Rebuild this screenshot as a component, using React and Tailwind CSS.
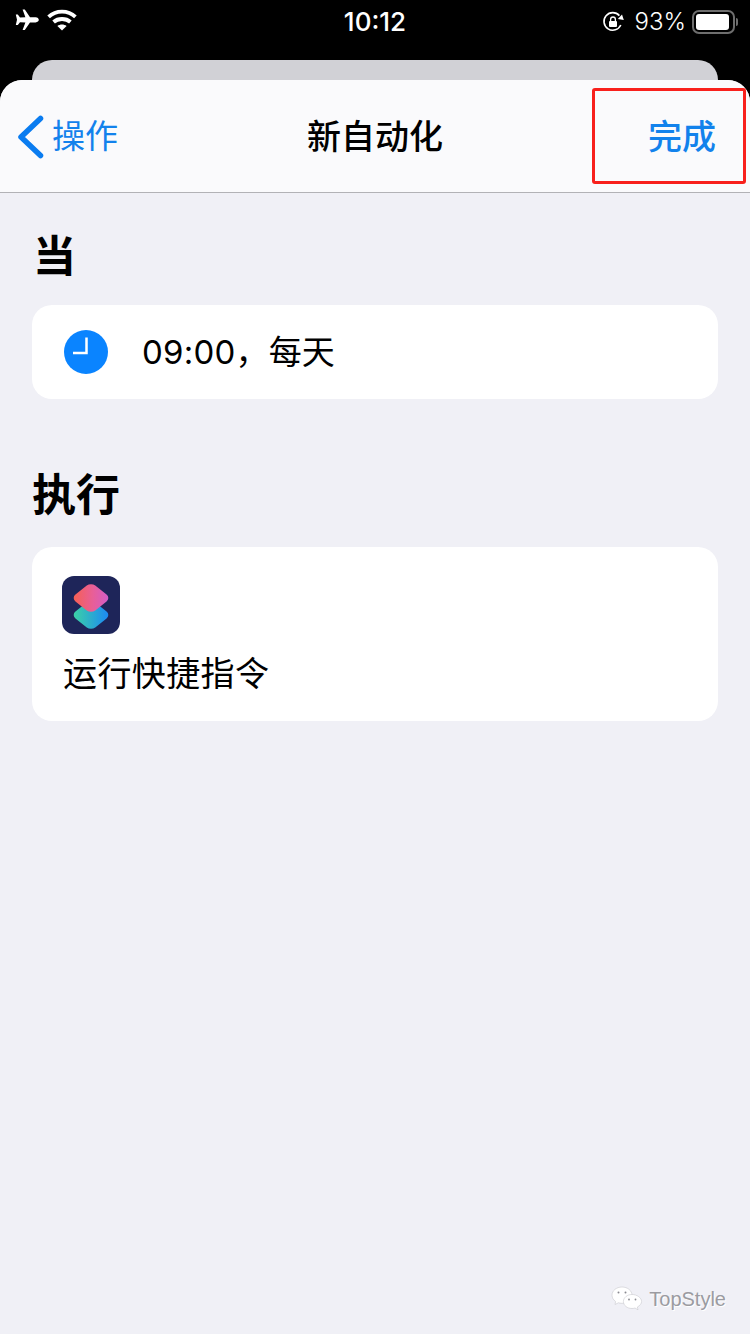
const FONT = 'font-["Inter","Noto_Sans_CJK_SC",sans-serif]'

function Airplane() {
  return (
    <svg width="24" height="22" viewBox="0 0 24 22" fill="#fff">
      <path d="M7.6 0.6 L9.8 0.6 L15 8.2 L20.6 8.2 C22.6 8.2 23.8 9.6 23.8 10.8 C23.8 12 22.6 13.4 20.6 13.4 L15 13.4 L9.8 21 L7.6 21 L10.4 13.4 L5 13.2 L2.8 16 L0.8 16 L2 10.8 L0.8 5.6 L2.8 5.6 L5 8.4 L10.4 8.2 Z" />
    </svg>
  )
}

function Wifi() {
  return (
    <svg width="30" height="22" viewBox="0 0 30 22" fill="none" stroke="#fff" strokeWidth="3.8">
      <path d="M1.6 7.8 C9 0.8 21 0.8 28.4 7.8" />
      <path d="M6.6 13 C11 9 19 9 23.4 13" />
      <path d="M15 21.500 L10.400 17 C13 15 17 15 19.600 17 Z" fill="#fff" stroke="none" />
    </svg>
  )
}

function RotationLock() {
  return (
    <svg width="22" height="22" viewBox="0 0 22 22" fill="none" stroke="#fff" strokeWidth="1.6">
      <path d="M18.800 14 A8.800 8.800 0 1 1 17.400 4.600" />
      <path d="M15.800 8 L21.800 9 L20 3.500 Z" fill="#fff" stroke="none" />
      <rect x="7" y="10" width="8" height="6" rx="1" fill="#fff" stroke="none" />
      <path d="M8.600 10 V8.400 A2.400 2.400 0 0 1 13.400 8.400 V10" strokeWidth="1.300" />
    </svg>
  )
}

function Battery() {
  return (
    <div className="flex items-center gap-[1px]">
      <div className="h-[24px] w-[43px] rounded-[7px] border-2 border-[#6e6e6e] p-[2px]">
        <div className="h-full w-[33px] rounded-[3px] bg-white" />
      </div>
      <div className="h-[8px] w-[2px] rounded-r-[2px] bg-[#6e6e6e]" />
    </div>
  )
}

function ClockIcon() {
  return (
    <svg width="44" height="44" viewBox="0 0 44 44">
      <circle cx="22" cy="22" r="22" fill="#0a84ff" />
      <path d="M22.500 7.500 V23 H9" fill="none" stroke="#fff" strokeWidth="2.500" />
    </svg>
  )
}

function ShortcutsIcon() {
  return (
    <svg width="58" height="58" viewBox="0 0 58 58">
      <defs>
        <linearGradient id="top" x1="0" y1="1" x2="1" y2="0">
          <stop offset="0" stopColor="#f8604a" />
          <stop offset="0.55" stopColor="#e85f98" />
          <stop offset="1" stopColor="#cf5ccf" />
        </linearGradient>
        <linearGradient id="bottom" x1="0" y1="1" x2="1" y2="0">
          <stop offset="0" stopColor="#3ed6a0" />
          <stop offset="1" stopColor="#1a84fa" />
        </linearGradient>
      </defs>
      <rect width="58" height="58" rx="12" fill="#1e2559" />
      <rect x="-14" y="-14" width="28" height="28" rx="6" fill="url(#bottom)" transform="translate(29 39) scale(1 0.8) rotate(45)" />
      <rect x="-14" y="-14" width="28" height="28" rx="6" fill="url(#top)" transform="translate(29 22) scale(1 0.8) rotate(45)" />
    </svg>
  )
}

function WechatMark() {
  return (
    <svg width="32" height="26" viewBox="0 0 32 26" fill="#fff" stroke="#c9c9cf" strokeWidth="0.6">
      <path d="M11 1 C5.500 1 1 4.600 1 9.200 C1 11.800 2.400 14 4.600 15.500 L4 18.500 L7.400 16.800 C8.500 17.100 9.500 17.300 11 17.300 C16.500 17.300 21 13.700 21 9.200 C21 4.600 16.500 1 11 1 Z" />
      <path d="M21 8.500 C16.200 8.500 12.400 11.700 12.400 15.500 C12.400 19.400 16.200 22.500 21 22.500 C22 22.500 23 22.300 24 22 L27 23.800 L26.400 21 C28.800 19.600 30.600 17.700 30.600 15.500 C30.600 11.700 25.800 8.500 21 8.500 Z" />
      <circle cx="7.500" cy="6.500" r="1" fill="#8a8a90" stroke="none" />
      <circle cx="14.500" cy="6.500" r="1" fill="#8a8a90" stroke="none" />
      <circle cx="18" cy="13.500" r="0.9" fill="#8a8a90" stroke="none" />
      <circle cx="24.500" cy="13.500" r="0.9" fill="#8a8a90" stroke="none" />
    </svg>
  )
}

export default function App() {
  return (
    <div className={`flex h-[1334px] w-[750px] flex-col overflow-hidden bg-black ${FONT}`}>
      <div className="flex h-[60px] shrink-0 items-start justify-between pl-[15px] pr-[12px] pt-[9px] text-white">
        <div className="flex items-center gap-[8px]">
          <Airplane />
          <Wifi />
        </div>
        <span className="absolute left-0 w-[750px] text-center text-[26px] font-medium leading-[26px]">10:12</span>
        <div className="flex items-center gap-[6px]">
          <div className="mr-[5px]">
            <RotationLock />
          </div>
          <span className="text-[24px] font-light leading-[26px]">93%</span>
          <Battery />
        </div>
      </div>
      <div className="mx-[32px] h-[20px] shrink-0 rounded-t-[20px] bg-[#d1d1d6]" />

      <div className="relative flex flex-1 flex-col overflow-hidden rounded-t-[22px] bg-[#f0f0f6]">
        <div className="flex h-[113px] shrink-0 items-center justify-between border-b border-[#b2b2b6] bg-[#fafafc] pl-[17px] pr-[34px] pt-[1px]">
          <div className="flex items-center gap-[8px] text-[33px] text-[#1282ec]">
            <svg width="27" height="44" viewBox="0 0 27 44" fill="none" stroke="#0a7cf0" strokeWidth="5.500" strokeLinecap="round" strokeLinejoin="round">
              <path d="M23.500 3.500 L4 22 L23.500 40.500" />
            </svg>
            <span>操作</span>
          </div>
          <span className="absolute left-0 w-[750px] text-center text-[34px] font-medium text-black">新自动化</span>
          <span className="text-[34px] font-medium text-[#1282ec]">完成</span>
        </div>

        <div className="flex flex-col px-[32px]">
          <h2 className="ml-[1px] mt-[36px] text-[43px] font-bold leading-[54px] text-black">当</h2>
          <div className="mt-[22px] flex h-[94px] items-center gap-[34px] rounded-[20px] bg-white pl-[32px]">
            <ClockIcon />
            <span className="pt-[2px] text-[33px] tracking-[0.2px] text-black">09:00，每天</span>
          </div>

          <h2 className="mt-[69px] text-[44px] font-bold leading-[54px] text-black">执行</h2>
          <div className="mt-[25px] flex h-[174px] flex-col rounded-[20px] bg-white pl-[30px] pt-[29px]">
            <ShortcutsIcon />
            <span className="ml-[1px] mt-[17px] text-[34px] leading-[46px] tracking-[0.4px] text-black">运行快捷指令</span>
          </div>
        </div>

        <div className="mr-[24px] mt-auto flex items-center justify-end gap-[6px] pb-[20px]">
          <WechatMark />
          <span className='font-["Liberation_Sans",sans-serif] text-[20px] text-[#9b9ba1] [text-shadow:1px_1px_0_#fff]'>TopStyle</span>
        </div>
      </div>

      {/* annotation on the Done button */}
      <div className="absolute left-[592px] top-[88px] h-[96px] w-[154px] rounded-[3px] border-[3px] border-[#f8201c]" />
    </div>
  )
}
